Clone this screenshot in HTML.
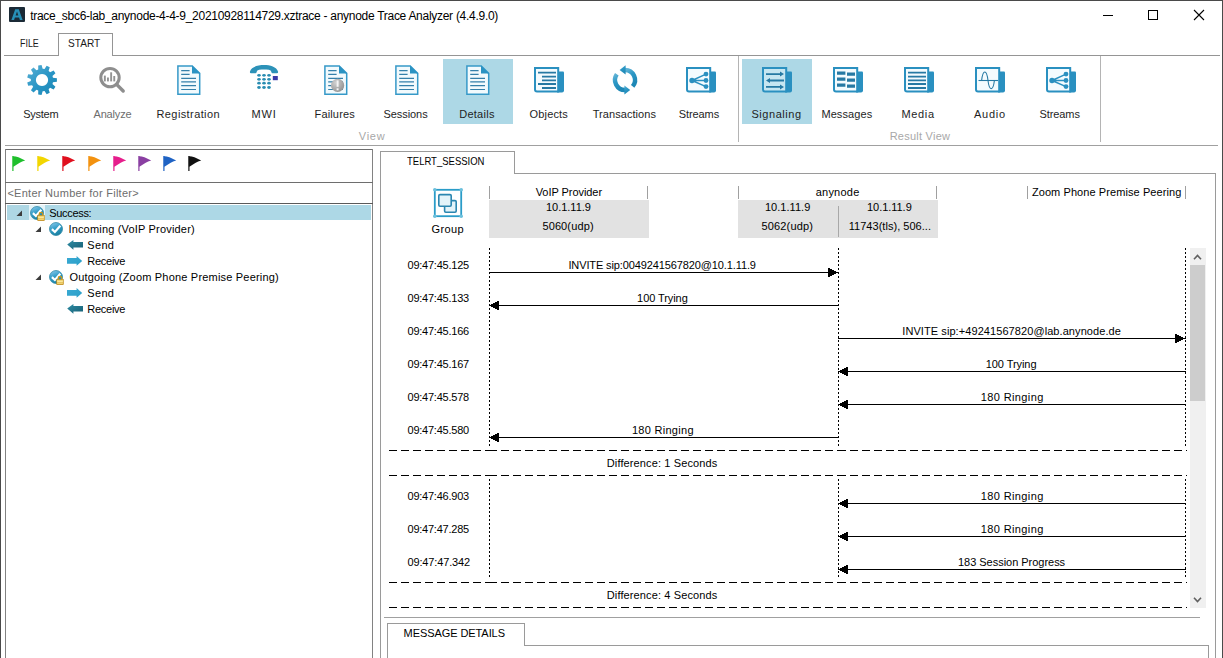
<!DOCTYPE html>
<html><head><meta charset="utf-8"><title>anynode Trace Analyzer</title>
<style>
html,body{margin:0;padding:0;background:#fff;}
body{width:1223px;height:658px;position:relative;overflow:hidden;font-family:"Liberation Sans",sans-serif;}
.t{position:absolute;white-space:pre;font-family:"Liberation Sans",sans-serif;}
svg{overflow:visible}
</style></head><body>

<div style="position:absolute;left:0px;top:0px;width:1223px;height:1px;background:#4a4a4a;"></div>
<div style="position:absolute;left:0px;top:0px;width:1px;height:658px;background:#4a4a4a;"></div>
<div style="position:absolute;left:1222px;top:0px;width:1px;height:658px;background:#4a4a4a;"></div>
<svg style="position:absolute;left:9px;top:7px" width="16" height="15" viewBox="0 0 16 15"><rect x="0" y="0" width="16" height="15" rx="1" fill="#1b2a36"/>
<path d="M6.2 2.2 H9.8 L13.6 13 H10.9 L10.1 10.6 H5.9 L5.1 13 H2.4 Z M6.6 8.4 H9.4 L8 4.4 Z" fill="#2790b8" fill-rule="evenodd"/></svg>
<div style="position:absolute;left:1103px;top:15px;width:10px;height:1px;background:#000;"></div>
<svg style="position:absolute;left:1148px;top:10px" width="10" height="10" viewBox="0 0 10 10"><rect x="0.5" y="0.5" width="9" height="9" fill="none" stroke="#000" stroke-width="1"/></svg>
<svg style="position:absolute;left:1194px;top:10px" width="10" height="10" viewBox="0 0 10 10"><path d="M0 0 L10 10 M10 0 L0 10" stroke="#000" stroke-width="1.1"/></svg>
<div style="position:absolute;left:4px;top:55px;width:54px;height:1px;background:#959595;"></div>
<div style="position:absolute;left:112px;top:55px;width:1108px;height:1px;background:#959595;"></div>
<div style="position:absolute;left:58px;top:33px;width:1px;height:23px;background:#959595;"></div>
<div style="position:absolute;left:58px;top:33px;width:55px;height:1px;background:#959595;"></div>
<div style="position:absolute;left:112px;top:33px;width:1px;height:23px;background:#959595;"></div>
<div style="position:absolute;left:443px;top:59px;width:70px;height:65px;background:#add8e6;"></div>
<div style="position:absolute;left:742px;top:59px;width:70px;height:65px;background:#add8e6;"></div>
<div style="position:absolute;left:738px;top:56px;width:1px;height:86px;background:#b4b4b4;"></div>
<div style="position:absolute;left:1100px;top:56px;width:1px;height:86px;background:#b4b4b4;"></div>
<div style="position:absolute;left:5px;top:145px;width:1213px;height:1px;background:#a0a0a0;"></div>
<svg style="position:absolute;left:27px;top:65px" width="30" height="30" viewBox="0 0 30 30"><defs><linearGradient id="gg" x1="0" y1="0" x2="1" y2="1"><stop offset="0" stop-color="#5ab0d4"/><stop offset="0.5" stop-color="#2a96c6"/><stop offset="1" stop-color="#1a86b4"/></linearGradient></defs>
<path d="M25.44 10.94 L25.65 11.54 L25.83 12.15 L25.98 12.77 L25.98 12.77 L29.90 13.30 L29.90 16.70 L25.98 17.23 L25.98 17.23 L25.83 17.85 L25.65 18.46 L25.44 19.06 L25.44 19.06 L28.46 21.63 L26.62 24.49 L23.03 22.81 L23.03 22.81 L22.57 23.25 L22.09 23.67 L21.59 24.06 L21.59 24.06 L22.74 27.85 L19.65 29.26 L17.53 25.91 L17.53 25.91 L16.91 26.04 L16.28 26.13 L15.65 26.18 L15.65 26.18 L14.56 29.99 L11.20 29.51 L11.23 25.55 L11.23 25.55 L10.64 25.32 L10.06 25.05 L9.50 24.76 L9.50 24.76 L6.52 27.38 L3.96 25.15 L6.13 21.83 L6.13 21.83 L5.75 21.32 L5.41 20.79 L5.10 20.23 L5.10 20.23 L1.18 20.83 L0.22 17.57 L3.84 15.95 L3.84 15.95 L3.80 15.32 L3.80 14.68 L3.84 14.05 L3.84 14.05 L0.22 12.43 L1.18 9.17 L5.10 9.77 L5.10 9.77 L5.41 9.21 L5.75 8.68 L6.13 8.17 L6.13 8.17 L3.96 4.85 L6.52 2.62 L9.50 5.24 L9.50 5.24 L10.06 4.95 L10.64 4.68 L11.23 4.45 L11.23 4.45 L11.20 0.49 L14.56 0.01 L15.65 3.82 L15.65 3.82 L16.28 3.87 L16.91 3.96 L17.53 4.09 L17.53 4.09 L19.65 0.74 L22.74 2.15 L21.59 5.94 L21.59 5.94 L22.09 6.33 L22.57 6.75 L23.03 7.19 L23.03 7.19 L26.62 5.51 L28.46 8.37 L25.44 10.94 Z M15 8.9 A6.1 6.1 0 1 0 15.01 8.9 Z" fill="url(#gg)" fill-rule="evenodd"/></svg>
<svg style="position:absolute;left:98px;top:65px" width="28" height="30" viewBox="0 0 28 30"><circle cx="12" cy="12.6" r="9.2" fill="none" stroke="#8e8e8e" stroke-width="3"/>
<path d="M18.6 19.4 L25.2 26" stroke="#8e8e8e" stroke-width="3.4" stroke-linecap="round"/>
<rect x="5.9" y="10.6" width="1.9" height="5.8" fill="#939393"/>
<rect x="9" y="12.5" width="1.9" height="3.9" fill="#939393"/>
<rect x="12.2" y="7.3" width="1.9" height="9.1" fill="#939393"/>
<rect x="15.3" y="11" width="1.9" height="5.4" fill="#939393"/></svg>
<svg style="position:absolute;left:177px;top:65px" width="24" height="30" viewBox="0 0 24 30"><path d="M0.9 0.9 H15.2 L22.7 8.4 V29.2 H0.9 Z" fill="#f2fafd" stroke="#3699c8" stroke-width="1.5" stroke-linejoin="miter"/>
<path d="M15 0.4 V8.6 H23.2 Z" fill="#2b93c3"/>
<path d="M4.2 5.6 H12.6 M4.2 9.4 H12.6 M4.2 13.3 H19 M4.2 16.9 H19 M4.2 20.7 H19 M4.2 24.5 H19" stroke="#3580aa" stroke-width="1.2"/></svg>
<svg style="position:absolute;left:324px;top:65px" width="24" height="30" viewBox="0 0 24 30"><path d="M0.9 0.9 H15.2 L22.7 8.4 V29.2 H0.9 Z" fill="#f2fafd" stroke="#3699c8" stroke-width="1.5" stroke-linejoin="miter"/>
<path d="M15 0.4 V8.6 H23.2 Z" fill="#2b93c3"/>
<path d="M4.2 5.6 H12.6 M4.2 9.4 H12.6 M4.2 13.3 H19 M4.2 16.9 H19 M4.2 20.7 H19 M4.2 24.5 H19" stroke="#3580aa" stroke-width="1.2"/><defs><radialGradient id="fg" cx="0.35" cy="0.3" r="0.8"><stop offset="0" stop-color="#d0d0d0"/><stop offset="1" stop-color="#8f8f8f"/></radialGradient></defs>
<circle cx="13.6" cy="20.4" r="6.6" fill="url(#fg)"/>
<path d="M13.6 15.4 V21.8" stroke="#f4f4f4" stroke-width="2"/><rect x="12.6" y="23.3" width="2" height="2" fill="#f4f4f4"/></svg>
<svg style="position:absolute;left:395px;top:65px" width="24" height="30" viewBox="0 0 24 30"><path d="M0.9 0.9 H15.2 L22.7 8.4 V29.2 H0.9 Z" fill="#f2fafd" stroke="#3699c8" stroke-width="1.5" stroke-linejoin="miter"/>
<path d="M15 0.4 V8.6 H23.2 Z" fill="#2b93c3"/>
<path d="M4.2 5.6 H12.6 M4.2 9.4 H12.6 M4.2 13.3 H19 M4.2 16.9 H19 M4.2 20.7 H19 M4.2 24.5 H19" stroke="#3580aa" stroke-width="1.2"/></svg>
<svg style="position:absolute;left:466px;top:65px" width="24" height="30" viewBox="0 0 24 30"><path d="M0.9 0.9 H15.2 L22.7 8.4 V29.2 H0.9 Z" fill="#f2fafd" stroke="#3699c8" stroke-width="1.5" stroke-linejoin="miter"/>
<path d="M15 0.4 V8.6 H23.2 Z" fill="#2b93c3"/>
<path d="M4.2 5.6 H12.6 M4.2 9.4 H12.6 M4.2 13.3 H19 M4.2 16.9 H19 M4.2 20.7 H19 M4.2 24.5 H19" stroke="#3580aa" stroke-width="1.2"/></svg>
<svg style="position:absolute;left:250px;top:65px" width="30" height="30" viewBox="0 0 30 30"><path d="M0 6.6 C1.2 1.8 8 0 14 0 C20 0 26.8 1.8 28 6.6 Q28.4 8.2 27 8.2 H22.6 Q21.4 8.2 21.4 7 Q21.2 5.2 18.8 4.8 C17 4.5 15.5 4.4 14 4.4 C12.5 4.4 11 4.5 9.2 4.8 Q6.8 5.2 6.6 7 Q6.6 8.2 5.4 8.2 H1 Q-0.4 8.2 0 6.6 Z" fill="#2c92b8"/>
<ellipse cx="9" cy="10.3" rx="1.8" ry="1.4" fill="#2a8db2"/><ellipse cx="14" cy="10.3" rx="1.8" ry="1.4" fill="#2a8db2"/><ellipse cx="19" cy="10.3" rx="1.8" ry="1.4" fill="#2a8db2"/><ellipse cx="9" cy="14.3" rx="1.8" ry="1.4" fill="#2a8db2"/><ellipse cx="14" cy="14.3" rx="1.8" ry="1.4" fill="#2a8db2"/><ellipse cx="19" cy="14.3" rx="1.8" ry="1.4" fill="#2a8db2"/><ellipse cx="9" cy="18.2" rx="1.8" ry="1.4" fill="#2a8db2"/><ellipse cx="14" cy="18.2" rx="1.8" ry="1.4" fill="#2a8db2"/><ellipse cx="19" cy="18.2" rx="1.8" ry="1.4" fill="#2a8db2"/><ellipse cx="9" cy="22.5" rx="1.8" ry="1.4" fill="#2a8db2"/><ellipse cx="14" cy="22.5" rx="1.8" ry="1.4" fill="#2a8db2"/><ellipse cx="19" cy="22.5" rx="1.8" ry="1.4" fill="#2a8db2"/><rect x="22.8" y="11" width="5" height="4.2" fill="#3a3aa8"/></svg>
<svg style="position:absolute;left:534px;top:67px" width="31" height="26" viewBox="0 0 31 26"><path d="M24 4.5 H29 Q30 4.5 30 5.5 V23.5 Q30 25.5 28 25.5 H23 Z" fill="#2a90c0"/>
<path d="M1 1 H24.2 V24.6 H3 Q1 24.6 1 22.6 Z" fill="#f4fbfe" stroke="#2a90c0" stroke-width="2"/>
<path d="M4 5.6 H22 M8 9.6 H22 M8 13.3 H22 M4 17 H22 M8 21 H22" stroke="#2679a3" stroke-width="1.8"/></svg>
<svg style="position:absolute;left:612px;top:65px" width="28" height="30" viewBox="0 0 28 30"><defs><linearGradient id="tg" x1="0" y1="0" x2="0.4" y2="1"><stop offset="0" stop-color="#62b4d6"/><stop offset="0.45" stop-color="#2d98c6"/><stop offset="1" stop-color="#1e88b6"/></linearGradient></defs>
<g fill="url(#tg)"><path d="M13 5 A10 10 0 0 1 20.66 21.43" fill="none" stroke="url(#tg)" stroke-width="4.4"/>
<path d="M13.6 0.2 L13.6 9.6 L7.6 4.9 Z"/>
<path d="M13 25 A10 10 0 0 1 4.81 9.26" fill="none" stroke="url(#tg)" stroke-width="4.4"/>
<path d="M12.4 20.6 L12.4 29.6 L18.2 25.1 Z"/></g></svg>
<svg style="position:absolute;left:686px;top:67px" width="31" height="26" viewBox="0 0 31 26"><path d="M24 4.5 H29 Q30 4.5 30 5.5 V23.5 Q30 25.5 28 25.5 H23 Z" fill="#2a90c0"/>
<path d="M1 1 H24.2 V24.6 H3 Q1 24.6 1 22.6 Z" fill="#f4fbfe" stroke="#2a90c0" stroke-width="2"/>
<path d="M6 13.5 L20 7.1 M6 13.5 H20 M6 13.5 L20 19.6" stroke="#2a90c0" stroke-width="1.4"/>
<circle cx="6" cy="13.5" r="2.7" fill="#2a90c0"/><circle cx="20" cy="7.1" r="2.4" fill="#2a90c0"/><circle cx="20" cy="13.5" r="2.4" fill="#2a90c0"/><circle cx="20" cy="19.6" r="2.4" fill="#2a90c0"/></svg>
<svg style="position:absolute;left:762px;top:67px" width="31" height="26" viewBox="0 0 31 26"><path d="M24 4.5 H29 Q30 4.5 30 5.5 V23.5 Q30 25.5 28 25.5 H23 Z" fill="#2a90c0"/>
<path d="M1 1 H24.2 V24.6 H3 Q1 24.6 1 22.6 Z" fill="#c6e6f1" stroke="#2a90c0" stroke-width="2"/>
<path d="M4 7.1 H19 M7 13.5 H22 M4 19.9 H19" stroke="#2679a3" stroke-width="1.8"/>
<path d="M18 4.6 L22 7.1 L18 9.6 Z M8 11 L4 13.5 L8 16 Z M18 17.4 L22 19.9 L18 22.4 Z" fill="#2679a3"/></svg>
<svg style="position:absolute;left:833px;top:67px" width="31" height="26" viewBox="0 0 31 26"><path d="M24 4.5 H29 Q30 4.5 30 5.5 V23.5 Q30 25.5 28 25.5 H23 Z" fill="#2a90c0"/>
<path d="M1 1 H24.2 V24.6 H3 Q1 24.6 1 22.6 Z" fill="#f4fbfe" stroke="#2a90c0" stroke-width="2"/>
<path d="M4 4.6 h8.4 v3.1 h-8.4 Z M14 5.6 h8 v3.1 h-8 Z M4 10.6 h8.4 v3.1 h-8.4 Z M14 11.6 h8 v3.1 h-8 Z M4 16.6 h8.4 v3.1 h-8.4 Z M14 17.6 h8 v3.1 h-8 Z" fill="#2679a3"/></svg>
<svg style="position:absolute;left:904px;top:67px" width="31" height="26" viewBox="0 0 31 26"><path d="M24 4.5 H29 Q30 4.5 30 5.5 V23.5 Q30 25.5 28 25.5 H23 Z" fill="#2a90c0"/>
<path d="M1 1 H24.2 V24.6 H3 Q1 24.6 1 22.6 Z" fill="#f4fbfe" stroke="#2a90c0" stroke-width="2"/>
<path d="M4 5.6 H22 M4 9.6 H22 M4 13.3 H22 M4 17 H22 M4 21 H22" stroke="#2679a3" stroke-width="1.8"/></svg>
<svg style="position:absolute;left:975px;top:67px" width="31" height="26" viewBox="0 0 31 26"><path d="M24 4.5 H29 Q30 4.5 30 5.5 V23.5 Q30 25.5 28 25.5 H23 Z" fill="#2a90c0"/>
<path d="M1 1 H24.2 V24.6 H3 Q1 24.6 1 22.6 Z" fill="#f4fbfe" stroke="#2a90c0" stroke-width="2"/>
<path d="M3.5 13.5 H23" stroke="#2679a3" stroke-width="1.1"/>
<path d="M6.6 13.5 C7.2 8.5 8.4 5 9.8 5 C11.2 5 12.4 8.5 13 13.5 C13.6 18.5 14.8 21.6 16.2 21.6 C17.6 21.6 18.8 18.5 19.4 13.5" fill="none" stroke="#2679a3" stroke-width="1.1"/></svg>
<svg style="position:absolute;left:1046px;top:67px" width="31" height="26" viewBox="0 0 31 26"><path d="M24 4.5 H29 Q30 4.5 30 5.5 V23.5 Q30 25.5 28 25.5 H23 Z" fill="#2a90c0"/>
<path d="M1 1 H24.2 V24.6 H3 Q1 24.6 1 22.6 Z" fill="#f4fbfe" stroke="#2a90c0" stroke-width="2"/>
<path d="M6 13.5 L20 7.1 M6 13.5 H20 M6 13.5 L20 19.6" stroke="#2a90c0" stroke-width="1.4"/>
<circle cx="6" cy="13.5" r="2.7" fill="#2a90c0"/><circle cx="20" cy="7.1" r="2.4" fill="#2a90c0"/><circle cx="20" cy="13.5" r="2.4" fill="#2a90c0"/><circle cx="20" cy="19.6" r="2.4" fill="#2a90c0"/></svg>
<div style="position:absolute;left:5px;top:149px;width:368px;height:1px;background:#6e6e6e;"></div>
<div style="position:absolute;left:5px;top:149px;width:1px;height:509px;background:#828282;"></div>
<div style="position:absolute;left:372px;top:149px;width:1px;height:509px;background:#828282;"></div>
<div style="position:absolute;left:5px;top:182px;width:368px;height:1px;background:#6e6e6e;"></div>
<div style="position:absolute;left:5px;top:203px;width:368px;height:1px;background:#5a5a5a;"></div>
<svg style="position:absolute;left:12px;top:156px" width="14" height="15" viewBox="0 0 14 15"><path d="M0.9 0 V15" stroke="#1fbf2c" stroke-width="1.2"/>
<path d="M0.9 0.3 C4 0.2 8 1.6 13.2 4.6 C9 5.8 5.5 8 1.8 10.6 L0.9 10.8 Z" fill="#1fbf2c"/></svg>
<svg style="position:absolute;left:37px;top:156px" width="14" height="15" viewBox="0 0 14 15"><path d="M0.9 0 V15" stroke="#f2d600" stroke-width="1.2"/>
<path d="M0.9 0.3 C4 0.2 8 1.6 13.2 4.6 C9 5.8 5.5 8 1.8 10.6 L0.9 10.8 Z" fill="#f2d600"/></svg>
<svg style="position:absolute;left:62px;top:156px" width="14" height="15" viewBox="0 0 14 15"><path d="M0.9 0 V15" stroke="#e0101e" stroke-width="1.2"/>
<path d="M0.9 0.3 C4 0.2 8 1.6 13.2 4.6 C9 5.8 5.5 8 1.8 10.6 L0.9 10.8 Z" fill="#e0101e"/></svg>
<svg style="position:absolute;left:88px;top:156px" width="14" height="15" viewBox="0 0 14 15"><path d="M0.9 0 V15" stroke="#f3920f" stroke-width="1.2"/>
<path d="M0.9 0.3 C4 0.2 8 1.6 13.2 4.6 C9 5.8 5.5 8 1.8 10.6 L0.9 10.8 Z" fill="#f3920f"/></svg>
<svg style="position:absolute;left:113px;top:156px" width="14" height="15" viewBox="0 0 14 15"><path d="M0.9 0 V15" stroke="#e61e8c" stroke-width="1.2"/>
<path d="M0.9 0.3 C4 0.2 8 1.6 13.2 4.6 C9 5.8 5.5 8 1.8 10.6 L0.9 10.8 Z" fill="#e61e8c"/></svg>
<svg style="position:absolute;left:138px;top:156px" width="14" height="15" viewBox="0 0 14 15"><path d="M0.9 0 V15" stroke="#8a3fa2" stroke-width="1.2"/>
<path d="M0.9 0.3 C4 0.2 8 1.6 13.2 4.6 C9 5.8 5.5 8 1.8 10.6 L0.9 10.8 Z" fill="#8a3fa2"/></svg>
<svg style="position:absolute;left:163px;top:156px" width="14" height="15" viewBox="0 0 14 15"><path d="M0.9 0 V15" stroke="#1f63c4" stroke-width="1.2"/>
<path d="M0.9 0.3 C4 0.2 8 1.6 13.2 4.6 C9 5.8 5.5 8 1.8 10.6 L0.9 10.8 Z" fill="#1f63c4"/></svg>
<svg style="position:absolute;left:188px;top:156px" width="14" height="15" viewBox="0 0 14 15"><path d="M0.9 0 V15" stroke="#111111" stroke-width="1.2"/>
<path d="M0.9 0.3 C4 0.2 8 1.6 13.2 4.6 C9 5.8 5.5 8 1.8 10.6 L0.9 10.8 Z" fill="#111111"/></svg>
<div style="position:absolute;left:7px;top:205px;width:22px;height:15px;background:#aed7e4;"></div>
<div style="position:absolute;left:29px;top:205px;width:16px;height:15px;background:#e4f3f8;"></div>
<div style="position:absolute;left:45px;top:205px;width:326px;height:15px;background:#add8e6;"></div>
<svg style="position:absolute;left:16px;top:210px" width="7" height="7" viewBox="0 0 7 7"><path d="M6 0.5 V6 H0.5 Z" fill="#3c3c3c"/></svg>
<svg style="position:absolute;left:35px;top:226px" width="7" height="7" viewBox="0 0 7 7"><path d="M6 0.5 V6 H0.5 Z" fill="#3c3c3c"/></svg>
<svg style="position:absolute;left:35px;top:274px" width="7" height="7" viewBox="0 0 7 7"><path d="M6 0.5 V6 H0.5 Z" fill="#3c3c3c"/></svg>
<svg style="position:absolute;left:30px;top:206px" width="15" height="15" viewBox="0 0 15 15"><defs><linearGradient id="cg30" x1="0.2" y1="0" x2="0.6" y2="1"><stop offset="0" stop-color="#86c8ec"/><stop offset="0.5" stop-color="#2f9ac4"/><stop offset="1" stop-color="#1a80a0"/></linearGradient></defs>
<circle cx="7" cy="7" r="6.5" fill="url(#cg30)" stroke="#237f9e" stroke-width="0.7"/>
<path d="M2.9 7.1 L5.9 10 L11.3 3.8" fill="none" stroke="#fff" stroke-width="2.2"/><defs><linearGradient id="lg30" x1="0" y1="0" x2="0" y2="1"><stop offset="0" stop-color="#fbe38a"/><stop offset="1" stop-color="#d29a12"/></linearGradient></defs>
<path d="M9.3 9.6 V8 A1.7 1.7 0 0 1 12.7 8 V9.6" fill="none" stroke="#c99516" stroke-width="1.3"/>
<rect x="7.7" y="9.4" width="6.6" height="5.2" fill="url(#lg30)" stroke="#b98410" stroke-width="0.6"/>
<path d="M8.2 11.4 H13.8 M8.2 13.2 H13.8" stroke="#fff4b8" stroke-width="0.8"/></svg>
<svg style="position:absolute;left:49px;top:222px" width="15" height="15" viewBox="0 0 15 15"><defs><linearGradient id="cg49" x1="0.2" y1="0" x2="0.6" y2="1"><stop offset="0" stop-color="#86c8ec"/><stop offset="0.5" stop-color="#2f9ac4"/><stop offset="1" stop-color="#1a80a0"/></linearGradient></defs>
<circle cx="7" cy="7" r="6.5" fill="url(#cg49)" stroke="#237f9e" stroke-width="0.7"/>
<path d="M2.9 7.1 L5.9 10 L11.3 3.8" fill="none" stroke="#fff" stroke-width="2.2"/></svg>
<svg style="position:absolute;left:49px;top:270px" width="15" height="15" viewBox="0 0 15 15"><defs><linearGradient id="cg49" x1="0.2" y1="0" x2="0.6" y2="1"><stop offset="0" stop-color="#86c8ec"/><stop offset="0.5" stop-color="#2f9ac4"/><stop offset="1" stop-color="#1a80a0"/></linearGradient></defs>
<circle cx="7" cy="7" r="6.5" fill="url(#cg49)" stroke="#237f9e" stroke-width="0.7"/>
<path d="M2.9 7.1 L5.9 10 L11.3 3.8" fill="none" stroke="#fff" stroke-width="2.2"/><defs><linearGradient id="lg49" x1="0" y1="0" x2="0" y2="1"><stop offset="0" stop-color="#fbe38a"/><stop offset="1" stop-color="#d29a12"/></linearGradient></defs>
<path d="M9.3 9.6 V8 A1.7 1.7 0 0 1 12.7 8 V9.6" fill="none" stroke="#c99516" stroke-width="1.3"/>
<rect x="7.7" y="9.4" width="6.6" height="5.2" fill="url(#lg49)" stroke="#b98410" stroke-width="0.6"/>
<path d="M8.2 11.4 H13.8 M8.2 13.2 H13.8" stroke="#fff4b8" stroke-width="0.8"/></svg>
<svg style="position:absolute;left:67px;top:240px" width="16" height="10" viewBox="0 0 16 10"><defs><linearGradient id="ag67240" x1="0" y1="0" x2="1" y2="1"><stop offset="0" stop-color="#2f8ea6"/><stop offset="1" stop-color="#175f74"/></linearGradient></defs><path d="M0.2 4.4 L6.4 0 V2 H16 V7.6 H6.4 V9.8 Z" fill="url(#ag67240)"/></svg>
<svg style="position:absolute;left:67px;top:256px" width="16" height="10" viewBox="0 0 16 10"><defs><linearGradient id="ag67256" x1="0" y1="0" x2="1" y2="1"><stop offset="0" stop-color="#3aaad4"/><stop offset="1" stop-color="#2a9fc8"/></linearGradient></defs><path d="M15.2 4.9 L9.6 0 V1.9 H0 V7.8 H9.6 V9.8 Z" fill="url(#ag67256)"/></svg>
<svg style="position:absolute;left:67px;top:288px" width="16" height="10" viewBox="0 0 16 10"><defs><linearGradient id="ag67288" x1="0" y1="0" x2="1" y2="1"><stop offset="0" stop-color="#3aaad4"/><stop offset="1" stop-color="#2a9fc8"/></linearGradient></defs><path d="M15.2 4.9 L9.6 0 V1.9 H0 V7.8 H9.6 V9.8 Z" fill="url(#ag67288)"/></svg>
<svg style="position:absolute;left:67px;top:304px" width="16" height="10" viewBox="0 0 16 10"><defs><linearGradient id="ag67304" x1="0" y1="0" x2="1" y2="1"><stop offset="0" stop-color="#2f8ea6"/><stop offset="1" stop-color="#175f74"/></linearGradient></defs><path d="M0.2 4.4 L6.4 0 V2 H16 V7.6 H6.4 V9.8 Z" fill="url(#ag67304)"/></svg>
<div style="position:absolute;left:380px;top:151px;width:1px;height:507px;background:#9a9a9a;"></div>
<div style="position:absolute;left:380px;top:151px;width:135px;height:1px;background:#9a9a9a;"></div>
<div style="position:absolute;left:514px;top:151px;width:1px;height:23px;background:#9a9a9a;"></div>
<div style="position:absolute;left:514px;top:173px;width:702px;height:1px;background:#9a9a9a;"></div>
<div style="position:absolute;left:1215px;top:173px;width:1px;height:485px;background:#9a9a9a;"></div>
<svg style="position:absolute;left:433px;top:188px" width="30" height="30" viewBox="0 0 30 30"><rect x="1.8" y="1.8" width="26.4" height="26.4" fill="none" stroke="#2a9cc8" stroke-width="1.8"/>
<circle cx="1.8" cy="1.8" r="1.8" fill="#6cc0dc"/><circle cx="28.2" cy="1.8" r="1.8" fill="#6cc0dc"/>
<circle cx="1.8" cy="28.2" r="1.8" fill="#6cc0dc"/><circle cx="28.2" cy="28.2" r="1.8" fill="#6cc0dc"/>
<rect x="11.6" y="12.6" width="11.6" height="11.6" rx="1.2" fill="#e3f3f9" stroke="#2b86b0" stroke-width="1.6"/>
<rect x="5.8" y="6.6" width="12.4" height="11.6" rx="1.2" fill="#e3f3f9" stroke="#2b86b0" stroke-width="1.6"/></svg>
<div style="position:absolute;left:489px;top:186px;width:1px;height:13px;background:#a0a0a0;"></div>
<div style="position:absolute;left:647px;top:186px;width:1px;height:13px;background:#a0a0a0;"></div>
<div style="position:absolute;left:738px;top:186px;width:1px;height:13px;background:#a0a0a0;"></div>
<div style="position:absolute;left:936px;top:186px;width:1px;height:13px;background:#a0a0a0;"></div>
<div style="position:absolute;left:1027px;top:186px;width:1px;height:13px;background:#a0a0a0;"></div>
<div style="position:absolute;left:1185px;top:186px;width:1px;height:13px;background:#a0a0a0;"></div>
<div style="position:absolute;left:489px;top:200px;width:160px;height:38px;background:#e2e2e2;"></div>
<div style="position:absolute;left:738px;top:200px;width:200px;height:38px;background:#e2e2e2;"></div>
<div style="position:absolute;left:838px;top:206px;width:1px;height:31px;background:#a8a8a8;"></div>
<div style="position:absolute;left:489px;top:248px;width:1px;height:198px;background:repeating-linear-gradient(to bottom,#000 0,#000 2px,transparent 2px,transparent 4px)"></div>
<div style="position:absolute;left:489px;top:479px;width:1px;height:99px;background:repeating-linear-gradient(to bottom,#000 0,#000 2px,transparent 2px,transparent 4px)"></div>
<div style="position:absolute;left:838px;top:248px;width:1px;height:198px;background:repeating-linear-gradient(to bottom,#000 0,#000 2px,transparent 2px,transparent 4px)"></div>
<div style="position:absolute;left:838px;top:479px;width:1px;height:99px;background:repeating-linear-gradient(to bottom,#000 0,#000 2px,transparent 2px,transparent 4px)"></div>
<div style="position:absolute;left:1185px;top:248px;width:1px;height:198px;background:repeating-linear-gradient(to bottom,#000 0,#000 2px,transparent 2px,transparent 4px)"></div>
<div style="position:absolute;left:1185px;top:479px;width:1px;height:99px;background:repeating-linear-gradient(to bottom,#000 0,#000 2px,transparent 2px,transparent 4px)"></div>
<div style="position:absolute;left:389px;top:450px;width:100px;height:1px;background:repeating-linear-gradient(to right,#000 0,#000 8px,transparent 8px,transparent 12px)"></div>
<div style="position:absolute;left:489px;top:450px;width:349px;height:1px;background:repeating-linear-gradient(to right,#000 0,#000 8px,transparent 8px,transparent 12px)"></div>
<div style="position:absolute;left:838px;top:450px;width:348px;height:1px;background:repeating-linear-gradient(to right,#000 0,#000 8px,transparent 8px,transparent 12px)"></div>
<div style="position:absolute;left:1186px;top:450px;width:1px;height:1px;background:#000;"></div>
<div style="position:absolute;left:389px;top:475px;width:100px;height:1px;background:repeating-linear-gradient(to right,#000 0,#000 8px,transparent 8px,transparent 12px)"></div>
<div style="position:absolute;left:489px;top:475px;width:349px;height:1px;background:repeating-linear-gradient(to right,#000 0,#000 8px,transparent 8px,transparent 12px)"></div>
<div style="position:absolute;left:838px;top:475px;width:348px;height:1px;background:repeating-linear-gradient(to right,#000 0,#000 8px,transparent 8px,transparent 12px)"></div>
<div style="position:absolute;left:1186px;top:475px;width:1px;height:1px;background:#000;"></div>
<div style="position:absolute;left:389px;top:582px;width:100px;height:1px;background:repeating-linear-gradient(to right,#000 0,#000 8px,transparent 8px,transparent 12px)"></div>
<div style="position:absolute;left:489px;top:582px;width:349px;height:1px;background:repeating-linear-gradient(to right,#000 0,#000 8px,transparent 8px,transparent 12px)"></div>
<div style="position:absolute;left:838px;top:582px;width:348px;height:1px;background:repeating-linear-gradient(to right,#000 0,#000 8px,transparent 8px,transparent 12px)"></div>
<div style="position:absolute;left:1186px;top:582px;width:1px;height:1px;background:#000;"></div>
<div style="position:absolute;left:389px;top:607px;width:100px;height:1px;background:repeating-linear-gradient(to right,#000 0,#000 8px,transparent 8px,transparent 12px)"></div>
<div style="position:absolute;left:489px;top:607px;width:349px;height:1px;background:repeating-linear-gradient(to right,#000 0,#000 8px,transparent 8px,transparent 12px)"></div>
<div style="position:absolute;left:838px;top:607px;width:348px;height:1px;background:repeating-linear-gradient(to right,#000 0,#000 8px,transparent 8px,transparent 12px)"></div>
<div style="position:absolute;left:1186px;top:607px;width:1px;height:1px;background:#000;"></div>
<div style="position:absolute;left:489px;top:272px;width:350px;height:1px;background:#000;"></div>
<div style="position:absolute;left:828px;top:268px;width:2px;height:9px;background:#000;"></div>
<div style="position:absolute;left:830px;top:269px;width:2px;height:7px;background:#000;"></div>
<div style="position:absolute;left:832px;top:270px;width:2px;height:5px;background:#000;"></div>
<div style="position:absolute;left:834px;top:271px;width:2px;height:3px;background:#000;"></div>
<div style="position:absolute;left:489px;top:305px;width:350px;height:1px;background:#000;"></div>
<div style="position:absolute;left:497px;top:301px;width:2px;height:9px;background:#000;"></div>
<div style="position:absolute;left:495px;top:302px;width:2px;height:7px;background:#000;"></div>
<div style="position:absolute;left:493px;top:303px;width:2px;height:5px;background:#000;"></div>
<div style="position:absolute;left:491px;top:304px;width:2px;height:3px;background:#000;"></div>
<div style="position:absolute;left:838px;top:338px;width:348px;height:1px;background:#000;"></div>
<div style="position:absolute;left:1175px;top:334px;width:2px;height:9px;background:#000;"></div>
<div style="position:absolute;left:1177px;top:335px;width:2px;height:7px;background:#000;"></div>
<div style="position:absolute;left:1179px;top:336px;width:2px;height:5px;background:#000;"></div>
<div style="position:absolute;left:1181px;top:337px;width:2px;height:3px;background:#000;"></div>
<div style="position:absolute;left:838px;top:371px;width:348px;height:1px;background:#000;"></div>
<div style="position:absolute;left:846px;top:367px;width:2px;height:9px;background:#000;"></div>
<div style="position:absolute;left:844px;top:368px;width:2px;height:7px;background:#000;"></div>
<div style="position:absolute;left:842px;top:369px;width:2px;height:5px;background:#000;"></div>
<div style="position:absolute;left:840px;top:370px;width:2px;height:3px;background:#000;"></div>
<div style="position:absolute;left:838px;top:404px;width:348px;height:1px;background:#000;"></div>
<div style="position:absolute;left:846px;top:400px;width:2px;height:9px;background:#000;"></div>
<div style="position:absolute;left:844px;top:401px;width:2px;height:7px;background:#000;"></div>
<div style="position:absolute;left:842px;top:402px;width:2px;height:5px;background:#000;"></div>
<div style="position:absolute;left:840px;top:403px;width:2px;height:3px;background:#000;"></div>
<div style="position:absolute;left:489px;top:437px;width:350px;height:1px;background:#000;"></div>
<div style="position:absolute;left:497px;top:433px;width:2px;height:9px;background:#000;"></div>
<div style="position:absolute;left:495px;top:434px;width:2px;height:7px;background:#000;"></div>
<div style="position:absolute;left:493px;top:435px;width:2px;height:5px;background:#000;"></div>
<div style="position:absolute;left:491px;top:436px;width:2px;height:3px;background:#000;"></div>
<div style="position:absolute;left:838px;top:503px;width:348px;height:1px;background:#000;"></div>
<div style="position:absolute;left:846px;top:499px;width:2px;height:9px;background:#000;"></div>
<div style="position:absolute;left:844px;top:500px;width:2px;height:7px;background:#000;"></div>
<div style="position:absolute;left:842px;top:501px;width:2px;height:5px;background:#000;"></div>
<div style="position:absolute;left:840px;top:502px;width:2px;height:3px;background:#000;"></div>
<div style="position:absolute;left:838px;top:536px;width:348px;height:1px;background:#000;"></div>
<div style="position:absolute;left:846px;top:532px;width:2px;height:9px;background:#000;"></div>
<div style="position:absolute;left:844px;top:533px;width:2px;height:7px;background:#000;"></div>
<div style="position:absolute;left:842px;top:534px;width:2px;height:5px;background:#000;"></div>
<div style="position:absolute;left:840px;top:535px;width:2px;height:3px;background:#000;"></div>
<div style="position:absolute;left:838px;top:569px;width:348px;height:1px;background:#000;"></div>
<div style="position:absolute;left:846px;top:565px;width:2px;height:9px;background:#000;"></div>
<div style="position:absolute;left:844px;top:566px;width:2px;height:7px;background:#000;"></div>
<div style="position:absolute;left:842px;top:567px;width:2px;height:5px;background:#000;"></div>
<div style="position:absolute;left:840px;top:568px;width:2px;height:3px;background:#000;"></div>
<div style="position:absolute;left:1190px;top:248px;width:16px;height:360px;background:#f0f0f0;"></div>
<div style="position:absolute;left:1190px;top:265px;width:15px;height:136px;background:#cdcdcd;"></div>
<svg style="position:absolute;left:1193px;top:253px" width="9" height="8" viewBox="0 0 9 8"><path d="M1 6.2 L4.5 2.4 L8 6.2" fill="none" stroke="#606060" stroke-width="1.6"/></svg>
<svg style="position:absolute;left:1193px;top:596px" width="9" height="8" viewBox="0 0 9 8"><path d="M1 1.8 L4.5 5.6 L8 1.8" fill="none" stroke="#606060" stroke-width="1.6"/></svg>
<div style="position:absolute;left:384px;top:617px;width:816px;height:1px;background:#a0a0a0;"></div>
<div style="position:absolute;left:387px;top:623px;width:1px;height:35px;background:#9a9a9a;"></div>
<div style="position:absolute;left:387px;top:623px;width:138px;height:1px;background:#9a9a9a;"></div>
<div style="position:absolute;left:524px;top:623px;width:1px;height:23px;background:#9a9a9a;"></div>
<div style="position:absolute;left:524px;top:645px;width:685px;height:1px;background:#9a9a9a;"></div>
<div style="position:absolute;left:1208px;top:645px;width:1px;height:13px;background:#9a9a9a;"></div>
<div class="t" style="left:30.2px;top:9px;font-size:12px;line-height:14px;letter-spacing:-0.282px;color:#000;">trace_sbc6-lab_anynode-4-4-9_20210928114729.xztrace - anynode Trace Analyzer (4.4.9.0)</div>
<div class="t" style="left:20.4px;top:37px;font-size:11px;line-height:13px;letter-spacing:0.0px;color:#1a1a1a;transform-origin:0 0;transform:scaleX(0.8098);">FILE</div>
<div class="t" style="left:68.3px;top:37px;font-size:11px;line-height:13px;letter-spacing:0.0px;color:#1a1a1a;transform-origin:0 0;transform:scaleX(0.9179);">START</div>
<div class="t" style="left:23.3px;top:108px;font-size:11px;line-height:13px;letter-spacing:-0.28px;color:#1e1e1e;">System</div>
<div class="t" style="left:93.5px;top:108px;font-size:11px;line-height:13px;letter-spacing:-0.167px;color:#6d6d6d;">Analyze</div>
<div class="t" style="left:156.5px;top:108px;font-size:11px;line-height:13px;letter-spacing:0.4px;color:#1e1e1e;">Registration</div>
<div class="t" style="left:251.4px;top:108px;font-size:11px;line-height:13px;letter-spacing:0.95px;color:#1e1e1e;">MWI</div>
<div class="t" style="left:314.5px;top:108px;font-size:11px;line-height:13px;letter-spacing:0.157px;color:#1e1e1e;">Failures</div>
<div class="t" style="left:383.5px;top:108px;font-size:11px;line-height:13px;letter-spacing:-0.071px;color:#1e1e1e;">Sessions</div>
<div class="t" style="left:459.2px;top:108px;font-size:11px;line-height:13px;letter-spacing:0.267px;color:#1e1e1e;">Details</div>
<div class="t" style="left:529.6px;top:108px;font-size:11px;line-height:13px;letter-spacing:0.15px;color:#1e1e1e;">Objects</div>
<div class="t" style="left:592.7px;top:108px;font-size:11px;line-height:13px;letter-spacing:0.064px;color:#1e1e1e;">Transactions</div>
<div class="t" style="left:678.7px;top:108px;font-size:11px;line-height:13px;letter-spacing:-0.083px;color:#1e1e1e;">Streams</div>
<div class="t" style="left:751.4px;top:108px;font-size:11px;line-height:13px;letter-spacing:0.562px;color:#1e1e1e;">Signaling</div>
<div class="t" style="left:821.4px;top:108px;font-size:11px;line-height:13px;letter-spacing:0.086px;color:#1e1e1e;">Messages</div>
<div class="t" style="left:901.5px;top:108px;font-size:11px;line-height:13px;letter-spacing:0.65px;color:#1e1e1e;">Media</div>
<div class="t" style="left:974.0px;top:108px;font-size:11px;line-height:13px;letter-spacing:0.725px;color:#1e1e1e;">Audio</div>
<div class="t" style="left:1039.4px;top:108px;font-size:11px;line-height:13px;letter-spacing:-0.067px;color:#1e1e1e;">Streams</div>
<div class="t" style="left:358.7px;top:130px;font-size:11px;line-height:13px;letter-spacing:0.8px;color:#a8a8a8;">View</div>
<div class="t" style="left:889.7px;top:130px;font-size:11px;line-height:13px;letter-spacing:0.24px;color:#a8a8a8;">Result View</div>
<div class="t" style="left:7.4px;top:187px;font-size:11px;line-height:13px;letter-spacing:0.275px;color:#6d6d6d;">&lt;Enter Number for Filter&gt;</div>
<div class="t" style="left:49.3px;top:207px;font-size:11px;line-height:13px;letter-spacing:-0.329px;color:#000;">Success:</div>
<div class="t" style="left:68.4px;top:223px;font-size:11px;line-height:13px;letter-spacing:0.183px;color:#000;">Incoming (VoIP Provider)</div>
<div class="t" style="left:87.3px;top:239px;font-size:11px;line-height:13px;letter-spacing:0.333px;color:#000;">Send</div>
<div class="t" style="left:87.3px;top:255px;font-size:11px;line-height:13px;letter-spacing:-0.267px;color:#000;">Receive</div>
<div class="t" style="left:69.4px;top:271px;font-size:11px;line-height:13px;letter-spacing:0.194px;color:#000;">Outgoing (Zoom Phone Premise Peering)</div>
<div class="t" style="left:87.3px;top:287px;font-size:11px;line-height:13px;letter-spacing:0.333px;color:#000;">Send</div>
<div class="t" style="left:87.3px;top:303px;font-size:11px;line-height:13px;letter-spacing:-0.267px;color:#000;">Receive</div>
<div class="t" style="left:407.4px;top:155px;font-size:11px;line-height:13px;letter-spacing:0.0px;color:#000;transform-origin:0 0;transform:scaleX(0.8641);">TELRT_SESSION</div>
<div class="t" style="left:431.5px;top:223px;font-size:11px;line-height:13px;letter-spacing:0.375px;color:#000;">Group</div>
<div class="t" style="left:535.7px;top:186px;font-size:11px;line-height:13px;letter-spacing:-0.058px;color:#000;">VoIP Provider</div>
<div class="t" style="left:545.9px;top:201px;font-size:11px;line-height:13px;letter-spacing:0.0px;color:#000;">10.1.11.9</div>
<div class="t" style="left:542.4px;top:220px;font-size:11px;line-height:13px;letter-spacing:0.125px;color:#000;">5060(udp)</div>
<div class="t" style="left:815.7px;top:186px;font-size:11px;line-height:13px;letter-spacing:0.233px;color:#000;">anynode</div>
<div class="t" style="left:764.9px;top:201px;font-size:11px;line-height:13px;letter-spacing:0.038px;color:#000;">10.1.11.9</div>
<div class="t" style="left:867.0px;top:201px;font-size:11px;line-height:13px;letter-spacing:-0.038px;color:#000;">10.1.11.9</div>
<div class="t" style="left:761.5px;top:220px;font-size:11px;line-height:13px;letter-spacing:0.163px;color:#000;">5062(udp)</div>
<div class="t" style="left:848.7px;top:220px;font-size:11px;line-height:13px;letter-spacing:0.035px;color:#000;">11743(tls), 506...</div>
<div class="t" style="left:1031.9px;top:186px;font-size:11px;line-height:13px;letter-spacing:0.084px;color:#000;">Zoom Phone Premise Peering</div>
<div class="t" style="left:407.5px;top:259px;font-size:11px;line-height:13px;letter-spacing:-0.236px;color:#000;">09:47:45.125</div>
<div class="t" style="left:407.5px;top:292px;font-size:11px;line-height:13px;letter-spacing:-0.236px;color:#000;">09:47:45.133</div>
<div class="t" style="left:407.5px;top:325px;font-size:11px;line-height:13px;letter-spacing:-0.236px;color:#000;">09:47:45.166</div>
<div class="t" style="left:407.5px;top:358px;font-size:11px;line-height:13px;letter-spacing:-0.236px;color:#000;">09:47:45.167</div>
<div class="t" style="left:407.5px;top:391px;font-size:11px;line-height:13px;letter-spacing:-0.236px;color:#000;">09:47:45.578</div>
<div class="t" style="left:407.5px;top:424px;font-size:11px;line-height:13px;letter-spacing:-0.236px;color:#000;">09:47:45.580</div>
<div class="t" style="left:407.5px;top:490px;font-size:11px;line-height:13px;letter-spacing:-0.236px;color:#000;">09:47:46.903</div>
<div class="t" style="left:407.5px;top:523px;font-size:11px;line-height:13px;letter-spacing:-0.236px;color:#000;">09:47:47.285</div>
<div class="t" style="left:407.5px;top:556px;font-size:11px;line-height:13px;letter-spacing:-0.145px;color:#000;">09:47:47.342</div>
<div class="t" style="left:568.4px;top:259px;font-size:11px;line-height:13px;letter-spacing:-0.115px;color:#000;">INVITE sip:0049241567820@10.1.11.9</div>
<div class="t" style="left:637.1px;top:292px;font-size:11px;line-height:13px;letter-spacing:-0.078px;color:#000;">100 Trying</div>
<div class="t" style="left:902.3px;top:325px;font-size:11px;line-height:13px;letter-spacing:0.076px;color:#000;">INVITE sip:+49241567820@lab.anynode.de</div>
<div class="t" style="left:985.7px;top:358px;font-size:11px;line-height:13px;letter-spacing:-0.056px;color:#000;">100 Trying</div>
<div class="t" style="left:980.8px;top:391px;font-size:11px;line-height:13px;letter-spacing:0.38px;color:#000;">180 Ringing</div>
<div class="t" style="left:631.9px;top:424px;font-size:11px;line-height:13px;letter-spacing:0.29px;color:#000;">180 Ringing</div>
<div class="t" style="left:606.8px;top:457px;font-size:11px;line-height:13px;letter-spacing:0.12px;color:#000;">Difference: 1 Seconds</div>
<div class="t" style="left:980.8px;top:490px;font-size:11px;line-height:13px;letter-spacing:0.38px;color:#000;">180 Ringing</div>
<div class="t" style="left:980.8px;top:523px;font-size:11px;line-height:13px;letter-spacing:0.38px;color:#000;">180 Ringing</div>
<div class="t" style="left:958.0px;top:556px;font-size:11px;line-height:13px;letter-spacing:-0.026px;color:#000;">183 Session Progress</div>
<div class="t" style="left:606.8px;top:589px;font-size:11px;line-height:13px;letter-spacing:0.12px;color:#000;">Difference: 4 Seconds</div>
<div class="t" style="left:403.6px;top:627px;font-size:11px;line-height:13px;letter-spacing:-0.079px;color:#000;">MESSAGE DETAILS</div>
</body></html>
